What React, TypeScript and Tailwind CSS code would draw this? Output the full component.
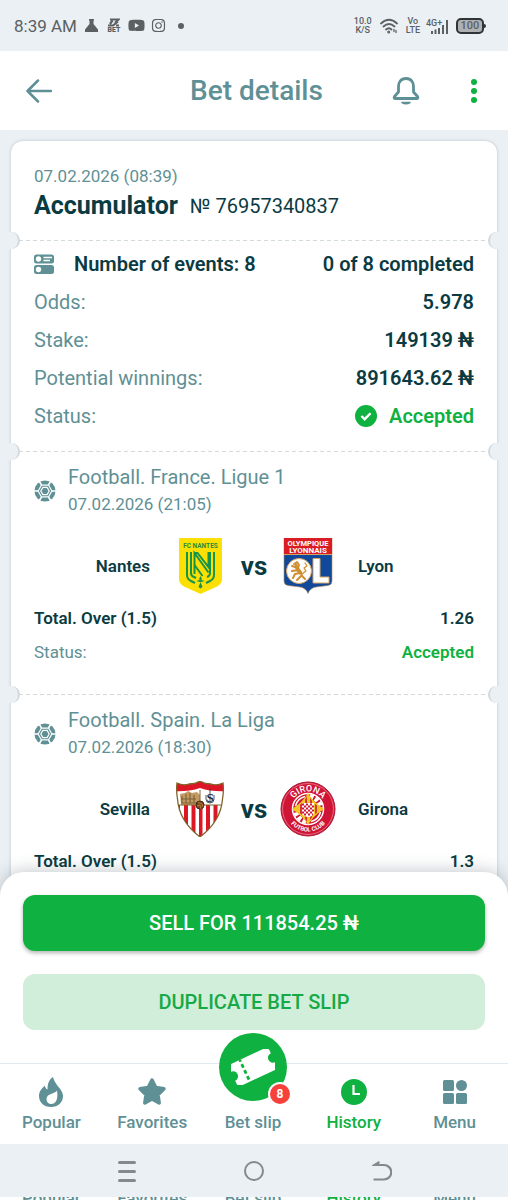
import type { ReactNode } from 'react';
import { FaInstagram, FaYoutube } from 'react-icons/fa';

type Match = {
  league: string;
  date: string;
  home: string;
  away: string;
  homeCrest: ReactNode;
  awayCrest: ReactNode;
  market: string;
  odds: string;
};

function NantesCrest() {
  return (
    <svg viewBox="0 0 56 56" className="size-14" role="img" aria-label="FC Nantes">
      <path d="M7 0h43v41q0 5-5 7.500L28.500 56 12 48.500Q7 46 7 41z" fill="#fce004" />
      <text x="28.500" y="10" textAnchor="middle" fontSize="6.500" fontWeight="700" fill="#2c8a3c" fontFamily="Roboto, sans-serif">
        FC NANTES
      </text>
      <g fill="none" stroke="#15944a" strokeWidth="2">
        <path d="M15 14v23q0 4 4 6l4 2M42 14v23q0 4-4 6l-4 2" />
        <path d="M19 14v21q0 3 3 4l2 1M38 14v21q0 3-3 4" />
        <path d="M22.500 36V15l14 19.500M22.500 15h3l11 14V14" />
        <path d="M22.500 27l8 11" />
      </g>
      <path d="M28.500 38l1.500 3-1.500 2-1.500-2zM24.500 43l3-1 1 1 1-1 3 1-3 1-1 0-1 0zM28.500 44l2 5-2 1.500-2-1.500z" fill="#15944a" />
    </svg>
  );
}

function LyonCrest() {
  return (
    <svg viewBox="0 0 56 56" className="size-14" role="img" aria-label="Olympique Lyonnais">
      <path d="M4 0h48v43q0 4-4 4.500l-12 1.500q-6 1-8 6.500q-2-5.500-8-6.500l-12-1.500q-4-.5-4-4.500z" fill="#10489c" stroke="#b78a50" strokeWidth=".6" />
      <path d="M4 0h48v16H4z" fill="#da1d24" />
      <path d="M4 16.500h48" stroke="#d6a560" />
      <text x="28" y="7.500" textAnchor="middle" fontSize="7.500" fontWeight="700" fill="#fff" fontFamily="Roboto, sans-serif">
        OLYMPIQUE
      </text>
      <text x="28" y="14.500" textAnchor="middle" fontSize="8" fontWeight="700" fill="#fff" fontFamily="Roboto, sans-serif">
        LYONNAIS
      </text>
      <circle cx="19" cy="33" r="12.500" fill="#fff" stroke="#d6a560" />
      <path d="M33 20.500h7V39h9v6H33z" fill="#fff" stroke="#d6a560" />
      <g fill="none" stroke="#cf8f32" strokeWidth="2" strokeLinecap="round" strokeLinejoin="round">
        <path d="M14 26l3-2 2 3-1 3 3 4 1 4 3 3M18 30l-6-2M19 32l-7 1M20 35l-5 1-2 4M21 38l-4 4" />
        <path d="M22 36l4-3-2-3 3-2-2-3" strokeWidth="1.300" />
        <path d="M16 27l1 4 3 4" strokeWidth="3" />
      </g>
    </svg>
  );
}

function SevillaCrest() {
  return (
    <svg viewBox="0 0 56 56" className="size-14" role="img" aria-label="Sevilla FC">
      <clipPath id="sevilla-shield">
        <path d="M5 2q6 3 12 1q7 0 11-3q4 3 11 3q6 2 12-1q1 7-.5 16Q49 40 28 56Q7 40 5.500 18Q4 9 5 2z" />
      </clipPath>
      <g clipPath="url(#sevilla-shield)">
        <path d="M0 0h56v56H0z" fill="#fff" />
        <path d="M0 0h56v10Q40 11 28 7Q16 11 0 10z" fill="#dd1626" />
        <path d="M3 24h5v32H3zM12 24h4v32h-4zM19.500 24h4v32h-4zM27 24h3.500v32H27zM34 24h4v32h-4zM41.500 24h4v32h-4zM49 24h4v32h-4z" fill="#dd1626" />
        <path d="M8 13l5-1 3-2 4 2 5-1 3 3v8l-4 2H9z" fill="#c39a64" />
        <path d="M10 15v7M14 13v9M18 12v10M22 14v8M9 18h15M9 22h16" stroke="#7c6038" strokeWidth="1.100" />
        <path d="M5 24h46M28 9v12" stroke="#80642c" />
      </g>
      <text x="38" y="20.500" textAnchor="middle" fontSize="13" fill="#1c2a39" fontFamily="Liberation Serif, serif">
        S
      </text>
      <path d="M34 14v4q0 4 4 4t4-4v-4M38 8v14" fill="none" stroke="#1c2a39" strokeWidth=".8" />
      <circle cx="28" cy="24" r="4" fill="#7c421b" stroke="#3e2816" />
      <path d="M26 21l4 2 1 3M25 25l3-1 1 4" fill="none" stroke="#c48b45" strokeWidth=".8" />
      <path d="M5 2q6 3 12 1q7 0 11-3q4 3 11 3q6 2 12-1q1 7-.5 16Q49 40 28 56Q7 40 5.500 18Q4 9 5 2z" fill="none" stroke="#80642c" strokeWidth="1.300" />
    </svg>
  );
}

function GironaCrest() {
  return (
    <svg viewBox="0 0 56 56" className="size-14" role="img" aria-label="Girona Futbol Club">
      <clipPath id="girona-diamond">
        <path d="M28 13q4 10 15 15q-11 5-15 15q-4-10-15-15q11-5 15-15z" />
      </clipPath>
      <circle cx="28" cy="28" r="27" fill="#cf1436" stroke="#ac1731" />
      <circle cx="28" cy="28" r="25.500" fill="none" stroke="#ef8fa0" strokeWidth=".7" />
      <circle cx="28" cy="28" r="15.500" fill="#cf1436" stroke="#fff" strokeWidth="1.500" />
      {/* checked bands in two opposite corners */}
      <path d="M30 15.500A12.500 12.500 0 0 1 40.500 27M26 40.500A12.500 12.500 0 0 1 15.500 29" fill="none" stroke="#fff" strokeWidth="5" strokeDasharray="3.600 1.800" />
      <path d="M15.500 25A13 13 0 0 1 25 15.500M40.500 31A13 13 0 0 1 31 40.500" fill="none" stroke="#fff" strokeWidth="1.600" />
      <path d="M28 12q5 9 16 16q-11 7-16 16q-5-9-16-16q11-7 16-16z" fill="#f6c623" />
      <g clipPath="url(#girona-diamond)">
        <path d="M21 10v36M26 10v36M31 10v36M36 10v36" stroke="#cf1436" strokeWidth="1.600" />
      </g>
      <path d="M22 22h12v10q0 3-6 4-6-1-6-4z" fill="#fff" />
      <path d="M22 23.500h12M22 27.500h12M22 31.500h12" stroke="#cf1436" strokeWidth="2" strokeDasharray="2 2" />
      <path d="M24 25.500h10M24 29.500h10M24 33.500h9" stroke="#cf1436" strokeWidth="2" strokeDasharray="2 2" />
      <path id="girona-top" d="M10.500 28a17.500 17.500 0 0 1 35 0" fill="none" />
      <path id="girona-bottom" d="M5.500 28a22.500 22.500 0 0 0 45 0" fill="none" />
      <text fontSize="9" fontWeight="500" fill="#fff" textAnchor="middle" fontFamily="Roboto, sans-serif">
        <textPath href="#girona-top" startOffset="50%">GIRONA</textPath>
      </text>
      <text fontSize="6" fontWeight="700" fill="#fff" textAnchor="middle" fontFamily="Roboto, sans-serif">
        <textPath href="#girona-bottom" startOffset="50%">FUTBOL CLUB</textPath>
      </text>
    </svg>
  );
}

function FootballIcon() {
  return (
    <svg viewBox="0 0 24 24" className="size-[22px] shrink-0" aria-hidden="true">
      <circle cx="12" cy="12" r="11.500" fill="#5f9095" />
      <path d="M8.200 5.500h7.600L19.500 12l-3.700 6.500H8.200L4.500 12z" fill="#5f9095" stroke="#fff" strokeWidth="1.300" />
      <path d="M8.200 5.500L5.500 1M15.800 5.500L18.500 1M19.500 12H24M15.800 18.500l2.700 4.500M8.200 18.500L5.500 23M4.500 12H0" stroke="#fff" strokeWidth="1.800" />
      <path d="M9.700 8h4.600l2.300 4-2.300 4H9.700l-2.300-4z" fill="#5f9095" stroke="#fff" strokeWidth="1.300" />
    </svg>
  );
}

function EventsIcon() {
  return (
    <svg viewBox="0 0 20 20" className="size-5 shrink-0" aria-hidden="true">
      <rect y=".5" width="20" height="9" rx="2.500" fill="#5f9095" />
      <rect y="11" width="20" height="9" rx="2.500" fill="#5f9095" />
      <circle cx="4.500" cy="5" r="2.700" fill="#fff" />
      <circle cx="4.500" cy="15.500" r="2.700" fill="#fff" />
      <path d="M9.500 3.500H18M9.500 6.500H16" stroke="#fff" strokeWidth="1.400" />
    </svg>
  );
}

const matches: Match[] = [
  {
    league: 'Football. France. Ligue 1',
    date: '07.02.2026 (21:05)',
    home: 'Nantes',
    away: 'Lyon',
    homeCrest: <NantesCrest />,
    awayCrest: <LyonCrest />,
    market: 'Total. Over (1.5)',
    odds: '1.26',
  },
  {
    league: 'Football. Spain. La Liga',
    date: '07.02.2026 (18:30)',
    home: 'Sevilla',
    away: 'Girona',
    homeCrest: <SevillaCrest />,
    awayCrest: <GironaCrest />,
    market: 'Total. Over (1.5)',
    odds: '1.3',
  },
];

const summary = [
  { label: 'Odds:', value: '5.978' },
  { label: 'Stake:', value: '149139 ₦' },
  { label: 'Potential winnings:', value: '891643.62 ₦' },
];

const tabs = [
  {
    label: 'Popular',
    icon: (
      <svg viewBox="0 0 24 30" className="h-[30px] w-6" aria-hidden="true">
        <path d="M14 0c-5 3.500-5.500 8-5.500 12.500C7 12 6 10.500 6 8.500 2.500 11.500 0 14.500 0 19c0 6.500 5 11 12 11s12-4.500 12-11c0-7-8.500-11-10-19z" fill="currentColor" />
        <path d="M18 13.500c-2 3.500-10.500 3-10.500 8.500 0 3 2.200 5 4.800 5 5 0 7-5.500 5.700-13.500z" fill="#fff" />
      </svg>
    ),
  },
  {
    label: 'Favorites',
    icon: (
      <svg viewBox="0 0 30 30" className="size-[30px]" aria-hidden="true">
        <path d="M15 3l3.800 7.500 8.200 1.300-6 5.900 1.200 8.300L15 22l-7.200 4L9 17.700l-6-5.900 8.200-1.300z" fill="currentColor" stroke="currentColor" strokeWidth="3.500" strokeLinejoin="round" />
      </svg>
    ),
  },
  { label: 'Bet slip', icon: null },
  {
    label: 'History',
    active: true,
    icon: (
      <svg viewBox="0 0 26 26" className="size-[26px]" aria-hidden="true">
        <circle cx="13" cy="13" r="13" fill="currentColor" />
        <path d="M12.500 6v9H19" fill="none" stroke="#fff" strokeWidth="2.200" />
      </svg>
    ),
  },
  {
    label: 'Menu',
    icon: (
      <svg viewBox="0 0 24 24" className="size-6" fill="currentColor" aria-hidden="true">
        <rect width="11" height="11" rx="1.500" />
        <circle cx="18.500" cy="5.500" r="5.500" />
        <rect y="13" width="11" height="11" rx="1.500" />
        <rect x="13" y="13" width="11" height="11" rx="1.500" />
      </svg>
    ),
  },
];

function StatusBar() {
  return (
    <div className="flex h-[51px] shrink-0 items-center justify-between pl-3.5 pr-[22px] text-[#5b6063]">
      <div className="flex items-center">
        <span className="text-[17px] leading-6">8:39 AM</span>
        <svg viewBox="0 0 13 13" className="ml-2 size-[13px]" fill="currentColor" aria-hidden="true">
          <path d="M4 0h5v1.500H8.500V5L13 10.500V13H0v-2.500L4.500 5V1.500H4z" />
        </svg>
        <div className="ml-2 flex w-4 flex-col items-center">
          <svg viewBox="0 0 13 9" className="h-[9px] w-[13px]" aria-hidden="true">
            <path d="M3 1.500h8.500L8 5M1 7.500h5l5-4M5.500 2.500L3 6M9 7.500h3" fill="none" stroke="currentColor" strokeWidth="2.200" />
          </svg>
          <span className="text-[7px] leading-[7px] font-black">BET</span>
        </div>
        <FaYoutube className="ml-1.5 size-[17px]" />
        <FaInstagram className="ml-1.5 size-[15px]" />
        <span className="ml-3 size-[6px] rounded-full bg-current" />
      </div>
      <div className="flex items-center font-medium">
        <div className="text-center text-[9px] leading-[9px]">
          <div>10.0</div>
          <div>K/S</div>
        </div>
        <svg viewBox="0 0 18 16" className="ml-2 h-4 w-[18px]" fill="none" stroke="currentColor" strokeWidth="1.800" strokeLinecap="round" aria-hidden="true">
          <path d="M1 5.500q8-7.500 16 0M3.500 8.500q5.500-5 11 0M6 11.500q3-2.500 5.500 0" />
          <circle cx="8.700" cy="14" r=".6" />
          <path d="M14 11.500v2M16 12.500v2" strokeWidth="1.300" />
        </svg>
        <div className="ml-2 text-center text-[9px] leading-[9px]">
          <div>Vo</div>
          <div>LTE</div>
        </div>
        <svg viewBox="0 0 24 16" className="ml-1.5 h-4 w-6" fill="none" stroke="currentColor" aria-label="Mobile signal" role="img">
          <text x="0" y="7.500" fontSize="9" fill="currentColor" stroke="none">
            4G+
          </text>
          <path d="M6 16v-3M9.500 16v-4.500M13 16v-6M17 16V7M21 16V2" strokeWidth="2" />
        </svg>
        <div className="ml-1.5 flex items-center">
          <span className="flex h-4 w-7 items-center justify-center rounded-[5px] border-2 border-[#303437] bg-[#aeb1b3] text-[11px] leading-3">100</span>
          <span className="h-1 w-0.5 rounded-r bg-[#303437]" />
        </div>
      </div>
    </div>
  );
}

function Header() {
  return (
    <header className="relative flex h-[79px] shrink-0 items-center justify-between bg-white px-[26px] text-[#5f9095]">
      <button type="button" aria-label="Back">
        <svg viewBox="0 0 26 24" className="h-6 w-[26px]" fill="none" stroke="currentColor" strokeWidth="2.500" strokeLinecap="round" strokeLinejoin="round" aria-hidden="true">
          <path d="M12 1.500L1.500 12 12 22.500M1.500 12H25" />
        </svg>
      </button>
      <h1 className="pl-[69px] text-[28px] leading-9 font-medium">Bet details</h1>
      <div className="flex items-center gap-[46px]">
        <button type="button" aria-label="Notifications">
          <svg viewBox="0 0 28 28" className="size-7" fill="none" stroke="currentColor" strokeWidth="2.800" strokeLinecap="round" strokeLinejoin="round" aria-hidden="true">
            <path d="M14 1.500c-5.500 0-7.500 4-7.500 8v5.500L2.500 19.500q-1 2 1 2h21q2 0 1-2l-4-4.500V9.500c0-4-2-8-7.500-8z" />
            <path d="M10 25.500q4 2.500 8 0z" strokeWidth="1.600" fill="currentColor" />
          </svg>
        </button>
        <button type="button" aria-label="More" className="flex w-4 flex-col items-center gap-[3px]">
          <span className="size-1.5 rounded-full bg-[#0fb140]" />
          <span className="size-1.5 rounded-full bg-[#0fb140]" />
          <span className="size-1.5 rounded-full bg-[#0fb140]" />
        </button>
      </div>
    </header>
  );
}

function Divider() {
  return (
    <div className="relative mx-2 h-px bg-[repeating-linear-gradient(90deg,#d3dade_0_4px,transparent_4px_7px)]">
      <span className="absolute -top-2 -left-[11px] h-[17px] w-3 rounded-r-full border-r-2 border-[#d3d8dc] bg-[#eaf0f4]" />
      <span className="absolute -top-2 -right-[11px] h-[17px] w-3 rounded-l-full border-l-2 border-[#d3d8dc] bg-[#eaf0f4]" />
    </div>
  );
}

function MatchSection({ match }: { match: Match }) {
  return (
    <section className="px-[23px] pt-3 pb-[25px]">
      <div className="flex items-center gap-3 text-[#5f9095]">
        <FootballIcon />
        <div>
          <h2 className="text-[20px] leading-[27px]">{match.league}</h2>
          <p className="text-[17px] leading-[27px]">{match.date}</p>
        </div>
      </div>
      <div className="mt-5 flex items-center text-[17px] leading-6 font-semibold">
        <span className="flex-1 pr-[22px] text-right">{match.home}</span>
        {match.homeCrest}
        <span className="w-[52px] text-center text-[26px] font-bold">vs</span>
        {match.awayCrest}
        <span className="flex-1 pl-[22px]">{match.away}</span>
      </div>
      <dl className="mt-[7px] text-[17px] leading-[34px]">
        <div className="flex justify-between font-semibold">
          <dt>{match.market}</dt>
          <dd>{match.odds}</dd>
        </div>
        <div className="flex justify-between">
          <dt className="text-[#5f9095]">Status:</dt>
          <dd className="font-semibold text-[#0fb140]">Accepted</dd>
        </div>
      </dl>
    </section>
  );
}

export default function App() {
  return (
    <div className="flex h-screen flex-col overflow-hidden bg-[#eaf0f4] font-[Roboto,sans-serif] text-[#0b3b42]">
      <StatusBar />
      <Header />

      {/* Bet slip ticket */}
      <main className="min-h-0 flex-1 overflow-hidden px-[11px] pt-[11px]">
        <article className="rounded-t-xl bg-white shadow-[0_0_3px_rgba(70,80,90,0.3)]">
          <section className="px-[23px] pt-[23px] pb-4">
            <p className="text-[17px] leading-6 text-[#5f9095]">07.02.2026 (08:39)</p>
            <div className="flex items-center gap-3 leading-9">
              <h2 className="text-[25px] font-bold">Accumulator</h2>
              <span className="text-[20px]">№ 76957340837</span>
            </div>
          </section>
          <Divider />
          <section className="px-[23px] pt-1 pb-4 text-[20px] leading-[38px]">
            <div className="flex items-center justify-between font-semibold">
              <div className="flex items-center gap-5">
                <EventsIcon />
                <span>Number of events: 8</span>
              </div>
              <span>0 of 8 completed</span>
            </div>
            <dl>
              {summary.map((row) => (
                <div key={row.label} className="flex justify-between">
                  <dt className="text-[#5f9095]">{row.label}</dt>
                  <dd className="font-semibold">{row.value}</dd>
                </div>
              ))}
              <div className="flex justify-between">
                <dt className="text-[#5f9095]">Status:</dt>
                <dd className="flex items-center gap-3 font-semibold text-[#0fb140]">
                  <svg viewBox="0 0 24 24" className="size-[22px]" aria-hidden="true">
                    <circle cx="12" cy="12" r="12" fill="currentColor" />
                    <path d="M7 12l3.500 3.500L17 9" fill="none" stroke="#fff" strokeWidth="2.600" />
                  </svg>
                  Accepted
                </dd>
              </div>
            </dl>
          </section>
          {matches.map((match) => (
            <div key={match.league}>
              <Divider />
              <MatchSection match={match} />
            </div>
          ))}
        </article>
      </main>

      {/* Actions */}
      <div className="relative z-10 -mt-6 flex shrink-0 flex-col gap-[23px] rounded-t-3xl bg-white px-[23px] pt-[23px] pb-[33px] text-[20px] font-medium shadow-[0_-2px_16px_rgba(40,60,70,0.25)]">
        <button type="button" className="h-14 rounded-xl bg-[#0fb140] text-white shadow-[0_2px_4px_rgba(0,0,0,0.3)]">
          SELL FOR 111854.25 ₦
        </button>
        <button type="button" className="h-14 rounded-xl bg-[#d0eed9] text-[#16a945]">
          DUPLICATE BET SLIP
        </button>
      </div>

      {/* Tabs */}
      <nav className="relative z-20 grid h-[81px] shrink-0 grid-cols-5 border-t border-[#dfe9ef] bg-white pr-[3px] pl-px text-[17px] leading-6 font-medium text-[#5f9095]">
        {tabs.map((tab) => (
          <a
            key={tab.label}
            href="#"
            className={`relative flex flex-col items-center justify-end pb-[10px] ${tab.active ? 'text-[#0fb140]' : ''}`}
          >
            {tab.icon ? (
              <span className="flex h-9 items-center">{tab.icon}</span>
            ) : (
              <span className="absolute -top-[31px] flex size-[68px] items-center justify-center rounded-full bg-[#0fb140]">
                <svg viewBox="0 0 44 36" className="h-9 w-11" aria-hidden="true">
                  <g transform="rotate(-25 22 18)">
                    <path d="M4 6h36q4 0 4 4v3a5 5 0 0 0 0 10v3q0 4-4 4H4q-4 0-4-4v-3a5 5 0 0 0 0-10v-3q0-4 4-4z" fill="#fff" />
                    <path d="M13 6v24" stroke="#0fb140" strokeWidth="2.800" strokeDasharray="4 2.600" strokeDashoffset="2" />
                  </g>
                </svg>
                <span className="absolute -right-[5px] -bottom-[5px] flex size-6 items-center justify-center rounded-full border-2 border-white bg-[#f8413a] text-[12px] font-bold text-white">
                  8
                </span>
              </span>
            )}
            {tab.label}
          </a>
        ))}
      </nav>

      {/* System navigation */}
      <div className="z-20 flex h-[53px] shrink-0 items-center justify-center gap-[108px] bg-[#eaf0f4] pt-px pl-0.5 text-[#85898c]">
        <button type="button" aria-label="Recent apps" className="flex w-[18px] flex-col gap-1.5">
          <span className="h-[3px] rounded-full bg-current" />
          <span className="h-[3px] rounded-full bg-current" />
          <span className="h-[3px] rounded-full bg-current" />
        </button>
        <button type="button" aria-label="Home" className="size-5 rounded-full border-2 border-current" />
        <button type="button" aria-label="Back">
          <svg viewBox="0 0 20 20" className="size-5" fill="none" stroke="currentColor" strokeWidth="2.200" aria-hidden="true">
            <path d="M7.500 1L2.500 4H12a7.200 7.200 0 0 1 0 14.500H1.500" />
          </svg>
        </button>
      </div>
      <div className="grid h-[3px] shrink-0 grid-cols-5 items-center overflow-hidden bg-white pr-[3px] pl-px text-[17px] font-medium text-[#5f9095]" aria-hidden="true">
        {tabs.map((tab) => (
          <span key={tab.label} className={`flex h-[3px] items-center justify-center ${tab.active ? 'text-[#0fb140]' : ''}`}>
            {tab.label}
          </span>
        ))}
      </div>
    </div>
  );
}
